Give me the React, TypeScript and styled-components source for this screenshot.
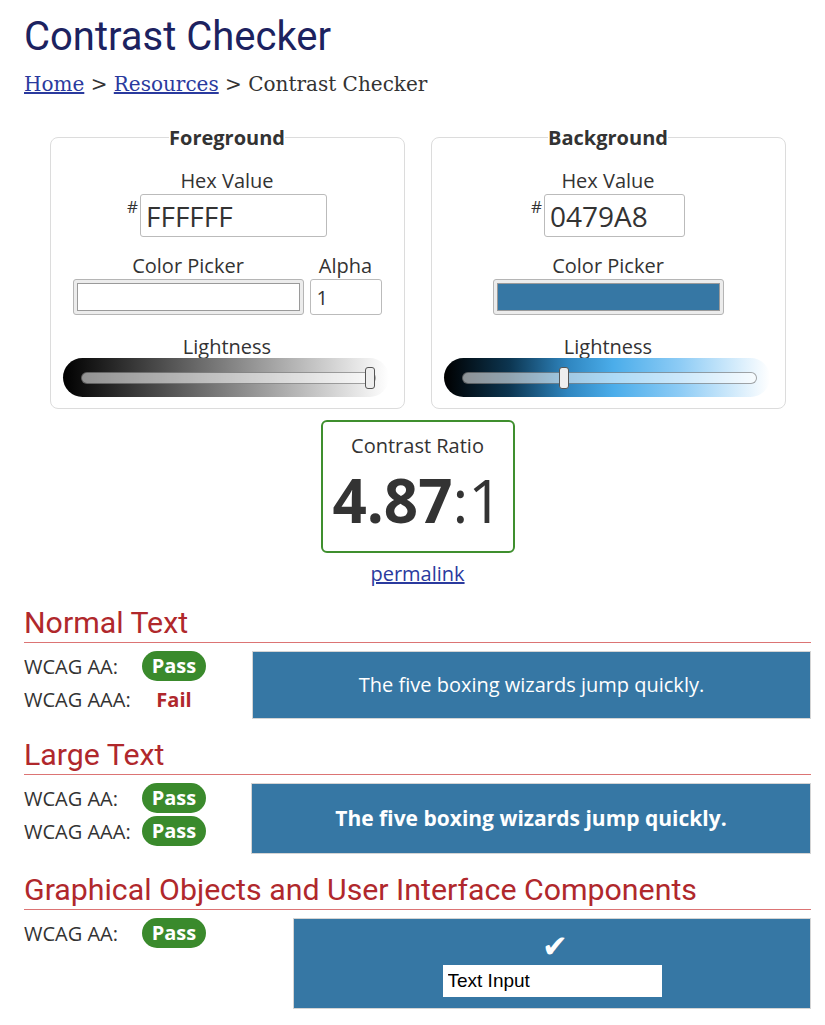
import React from 'react';
import styled, {createGlobalStyle} from 'styled-components';

const GlobalStyle = createGlobalStyle`
  html, body {
    margin: 0;
    padding: 0;
    background: #fff;
  }

  body {
    font-family: 'Open Sans', 'DejaVu Sans', sans-serif;
    color: #333;
  }
`;

const Page = styled.main`
  width: 787px;
  padding: 13px 0 0 24px;
`;

const Title = styled.h1`
  margin: 0;
  font-family: Roboto, 'Liberation Sans', sans-serif;
  font-weight: 400;
  font-size: 40px;
  line-height: 47px;
  color: #1c2260;
`;

const Crumbs = styled.nav`
  margin-top: 12px;
  font-family: 'DejaVu Serif', 'Liberation Serif', serif;
  font-size: 20px;
  line-height: 24px;
  color: #333;

  a {
    color: #2a3a9e;
    text-decoration: underline;
  }
`;

const Pickers = styled.div`
  display: flex;
  justify-content: center;
  gap: 26px;
  margin-top: 28px;
`;

const Panel = styled.fieldset`
  width: 355px;
  box-sizing: border-box;
  min-width: 0;
  margin: 0;
  padding: 16px 0 11px;
  border: 1px solid #dcdcdc;
  border-radius: 8px;
`;

const PanelTitle = styled.legend`
  margin: 0 auto;
  padding: 0;
  font-weight: 700;
  font-size: 20px;
  line-height: 27px;
`;

const PanelBody = styled.div`
  display: flex;
  flex-direction: column;
  align-items: center;
`;

const Label = styled.div`
  font-size: 20px;
  line-height: 27px;
  text-align: center;
`;

const HexRow = styled.div`
  display: flex;
  align-items: flex-start;
  margin-bottom: 15px;
`;

const Hash = styled.span`
  font-size: 17px;
  line-height: 20px;
  margin: 3px 2px 0 0;
`;

const HexInput = styled.input<{$width: number}>`
  width: ${p => p.$width}px;
  height: 43px;
  box-sizing: border-box;
  padding: 0 5px;
  border: 1px solid #bbb;
  border-radius: 3px;
  font-family: 'Open Sans', sans-serif;
  font-size: 28px;
  color: #333;
  background: #fff;
`;

const PickerRow = styled.div`
  display: flex;
  gap: 6px;
  margin-bottom: 18px;
`;

const Field = styled.div`
  display: flex;
  flex-direction: column;
  align-items: center;
`;

const ColorWell = styled.div`
  width: 231px;
  height: 36px;
  box-sizing: border-box;
  padding: 3px;
  background: #ececec;
  border: 1px solid #b5b5b5;
  border-radius: 3px;
`;

const Swatch = styled.div<{$color: string}>`
  height: 100%;
  box-sizing: border-box;
  border: 1px solid #9a9a9a;
  background: ${p => p.$color};
`;

const AlphaInput = styled.input`
  width: 72px;
  height: 36px;
  box-sizing: border-box;
  padding: 0 6px;
  border: 1px solid #bbb;
  border-radius: 3px;
  font-family: 'Open Sans', sans-serif;
  font-size: 20px;
  color: #333;
`;

const SliderWell = styled.div<{$gradient: string}>`
  align-self: flex-start;
  display: flex;
  align-items: center;
  width: 326px;
  height: 39px;
  box-sizing: border-box;
  margin: -2px 0 0 12px;
  padding: 0 13px 0 18px;
  border-radius: 20px;
  background: ${p => p.$gradient};
`;

const Track = styled.div`
  position: relative;
  flex: 1;
  height: 12px;
  box-sizing: border-box;
  border: 1px solid rgba(0, 0, 0, 0.35);
  border-radius: 6px;
  background: rgba(255, 255, 255, 0.55);
`;

const Thumb = styled.div`
  position: absolute;
  top: 50%;
  width: 10px;
  height: 22px;
  box-sizing: border-box;
  transform: translateY(-50%);
  border: 1.5px solid #555;
  border-radius: 3px;
  background: #eee;
`;

const RatioBox = styled.div`
  width: 194px;
  box-sizing: border-box;
  margin: 11px auto 0;
  padding: 10px 0 21px;
  border: 2px solid #3f8f2e;
  border-radius: 6px;
  text-align: center;
`;

const RatioValue = styled.div`
  margin-top: 11px;
  font-size: 60px;
  line-height: 60px;

  strong {
    font-weight: 700;
  }
`;

const Permalink = styled.a`
  display: block;
  margin-top: 7px;
  font-size: 20px;
  line-height: 27px;
  text-align: center;
  color: #2a3a9e;
  text-decoration: underline;
`;

const SectionHeading = styled.h2<{$first?: boolean}>`
  margin: 18px 0 0;
  padding-bottom: 2px;
  border-bottom: 1px solid #dc7474;
  font-family: Roboto, 'Liberation Sans', sans-serif;
  font-weight: 400;
  font-size: 30.3px;
  line-height: 35px;
  color: #b0282c;
`;

const Result = styled.div`
  display: flex;
  margin-top: 8px;
`;

const Checks = styled.div<{$width: number}>`
  width: ${p => p.$width}px;
  display: flex;
  flex-direction: column;
  gap: 3px;
`;

const CheckRow = styled.div`
  display: flex;
  align-items: center;
  height: 30px;
  font-size: 20px;
`;

const CheckLabel = styled.span`
  width: 117px;
`;

const Verdict = styled.span`
  width: 66px;
  text-align: center;
`;

const PassBadge = styled.span`
  display: inline-block;
  padding: 0 10px;
  border-radius: 15px;
  background: #3a8a2c;
  color: #fff;
  font-weight: 700;
  line-height: 30px;
`;

const FailText = styled.span`
  color: #b0282c;
  font-weight: 700;
`;

const Sample = styled.div<{$size: number; $bold?: boolean}>`
  flex: 1;
  padding: ${p => (p.$bold ? '20px 10px 21px' : '19px 10px')};
  border: 1px solid #d4d4d4;
  background: #3677a4;
  color: #fff;
  text-align: center;
  font-size: ${p => p.$size}px;
  font-weight: ${p => (p.$bold ? 700 : 400)};
  line-height: 28px;
`;

const UiSample = styled.div`
  flex: 1;
  display: flex;
  flex-direction: column;
  align-items: center;
  padding: 8px 0 11px;
  border: 1px solid #d4d4d4;
  background: #3677a4;
`;

const Check = styled.span`
  font-family: 'DejaVu Sans', sans-serif;
  font-size: 31px;
  line-height: 38px;
  color: #fff;
  margin-left: 6px;
`;

const UiInput = styled.input`
  width: 219px;
  height: 32px;
  box-sizing: border-box;
  padding: 0 5px;
  border: none;
  background: #fff;
  font-family: 'Liberation Sans', Arial, sans-serif;
  font-size: 19px;
  color: #000;
`;

type Verdict = 'pass' | 'fail';

const CheckLine = ({label, result}: {label: string; result: Verdict}) => (
  <CheckRow>
    <CheckLabel>{label}</CheckLabel>
    <Verdict>
      {result === 'pass' ? <PassBadge>Pass</PassBadge> : <FailText>Fail</FailText>}
    </Verdict>
  </CheckRow>
);

const Slider = ({gradient, value}: {gradient: string; value: number}) => (
  <SliderWell $gradient={gradient}>
    <Track>
      <Thumb style={{left: `calc(${value} * (100% - 10px))`}} />
    </Track>
  </SliderWell>
);

const SAMPLE = 'The five boxing wizards jump quickly.';

export default function App() {
  return (
    <>
      <GlobalStyle />
      <Page>
        <Title>Contrast Checker</Title>
        <Crumbs>
          <a href="#home">Home</a> &gt; <a href="#resources">Resources</a> &gt; Contrast
          Checker
        </Crumbs>

        <Pickers>
          <Panel>
            <PanelTitle>Foreground</PanelTitle>
            <PanelBody>
              <Label>Hex Value</Label>
              <HexRow>
                <Hash>#</Hash>
                <HexInput $width={187} defaultValue="FFFFFF" />
              </HexRow>
              <PickerRow>
                <Field>
                  <Label>Color Picker</Label>
                  <ColorWell>
                    <Swatch $color="#ffffff" />
                  </ColorWell>
                </Field>
                <Field>
                  <Label>Alpha</Label>
                  <AlphaInput defaultValue="1" />
                </Field>
              </PickerRow>
              <Label>Lightness</Label>
              <Slider gradient="linear-gradient(to right, #000 0%, #fff 100%)" value={1} />
            </PanelBody>
          </Panel>

          <Panel>
            <PanelTitle>Background</PanelTitle>
            <PanelBody>
              <Label>Hex Value</Label>
              <HexRow>
                <Hash>#</Hash>
                <HexInput $width={141} defaultValue="0479A8" />
              </HexRow>
              <PickerRow>
                <Field>
                  <Label>Color Picker</Label>
                  <ColorWell>
                    <Swatch $color="#3677a4" />
                  </ColorWell>
                </Field>
              </PickerRow>
              <Label>Lightness</Label>
              <Slider
                gradient="linear-gradient(to right, #000 0%, #0c3550 20%, #2f86c0 38%, #4badea 52%, #8ccbf5 72%, #fff 100%)"
                value={0.34}
              />
            </PanelBody>
          </Panel>
        </Pickers>

        <RatioBox>
          <Label>Contrast Ratio</Label>
          <RatioValue>
            <strong>4.87</strong>:1
          </RatioValue>
        </RatioBox>
        <Permalink href="#permalink">permalink</Permalink>

        <SectionHeading $first>Normal Text</SectionHeading>
        <Result>
          <Checks $width={228}>
            <CheckLine label="WCAG AA:" result="pass" />
            <CheckLine label="WCAG AAA:" result="fail" />
          </Checks>
          <Sample $size={20}>{SAMPLE}</Sample>
        </Result>

        <SectionHeading>Large Text</SectionHeading>
        <Result>
          <Checks $width={227}>
            <CheckLine label="WCAG AA:" result="pass" />
            <CheckLine label="WCAG AAA:" result="pass" />
          </Checks>
          <Sample $size={21} $bold>
            {SAMPLE}
          </Sample>
        </Result>

        <SectionHeading>Graphical Objects and User Interface Components</SectionHeading>
        <Result>
          <Checks $width={269}>
            <CheckLine label="WCAG AA:" result="pass" />
          </Checks>
          <UiSample>
            <Check>✔</Check>
            <UiInput defaultValue="Text Input" />
          </UiSample>
        </Result>
      </Page>
    </>
  );
}
